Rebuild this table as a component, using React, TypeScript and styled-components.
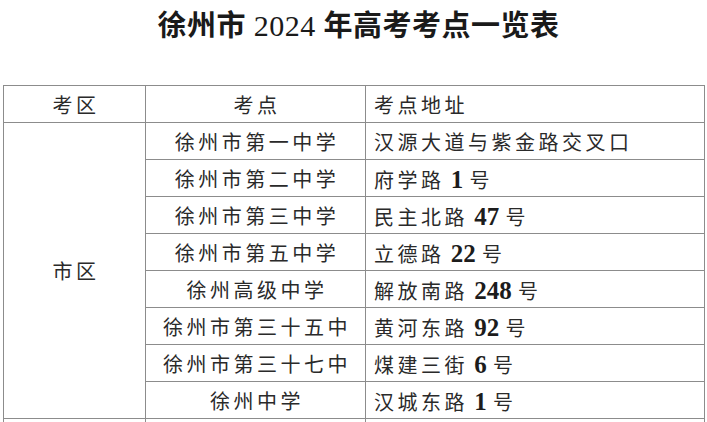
import React from "react";
import styled, { createGlobalStyle } from "styled-components";

const Global = createGlobalStyle`
  html, body { margin: 0; padding: 0; background: #ffffff; overflow: hidden; }
  body { font-family: "Liberation Serif", "Noto Sans CJK SC", serif; color: #262626; }
`;

const Page = styled.div`
  width: 707px;
  height: 422px;
  display: flex;
  flex-direction: column;
  align-items: stretch;
  overflow: hidden;
`;

const Title = styled.h1`
  margin: 0 0 35px 0;
  height: 50px;
  line-height: 52px;
  text-align: center;
  font-family: "Liberation Serif", "Noto Sans CJK SC", serif;
  font-size: 29px;
  font-weight: 700;
  letter-spacing: 0.5px;
  color: #1a1a1a;
  padding-left: 10px;
`;

const Year = styled.span`
  font-weight: 400;
  font-size: 30px;
`;

const Table = styled.table`
  margin-left: 3px;
  width: 701px;
  border-collapse: collapse;
  table-layout: fixed;
`;

const Row = styled.tr`
  height: 37px;
`;

const Cell = styled.td<{ $align?: "left" | "center" }>`
  border: 1.5px solid #8c8c8c;
  padding: 3px 0 0 ${(p) => (p.$align === "left" ? "8px" : "3px")};
  text-align: ${(p) => p.$align ?? "center"};
  vertical-align: middle;
  font-family: "Liberation Serif", "Noto Sans CJK SC", serif;
  font-size: 20px;
  letter-spacing: 3.5px;
  line-height: 1;
  white-space: nowrap;
  color: #2a2a2a;
`;

const Num = styled.span`
  font-family: "Liberation Serif", serif;
  font-weight: 700;
  font-size: 25px;
  letter-spacing: 0;
  color: #1c1c1c;
`;

type Item = { school: string; road: string; num?: string };

const items: Item[] = [
  { school: "徐州市第一中学", road: "汉源大道与紫金路交叉口" },
  { school: "徐州市第二中学", road: "府学路", num: "1" },
  { school: "徐州市第三中学", road: "民主北路", num: "47" },
  { school: "徐州市第五中学", road: "立德路", num: "22" },
  { school: "徐州高级中学", road: "解放南路", num: "248" },
  { school: "徐州市第三十五中", road: "黄河东路", num: "92" },
  { school: "徐州市第三十七中", road: "煤建三街", num: "6" },
  { school: "徐州中学", road: "汉城东路", num: "1" },
];

export default function App() {
  return (
    <>
      <Global />
      <Page>
        <Title>
          徐州市 <Year>2024</Year> 年高考考点一览表
        </Title>
        <Table>
          <colgroup>
            <col style={{ width: 142 }} />
            <col style={{ width: 220 }} />
            <col style={{ width: 339 }} />
          </colgroup>
          <tbody>
            <Row>
              <Cell>考区</Cell>
              <Cell>考点</Cell>
              <Cell $align="left">考点地址</Cell>
            </Row>
            {items.map((it, i) => (
              <Row key={i}>
                {i === 0 && <Cell rowSpan={items.length}>市区</Cell>}
                <Cell>{it.school}</Cell>
                <Cell $align="left">
                  {it.num ? (
                    <>
                      {it.road}
                      <Num> {it.num} </Num>号
                    </>
                  ) : (
                    it.road
                  )}
                </Cell>
              </Row>
            ))}
            <Row>
              <Cell>&nbsp;</Cell>
              <Cell>&nbsp;</Cell>
              <Cell $align="left">&nbsp;</Cell>
            </Row>
          </tbody>
        </Table>
      </Page>
    </>
  );
}
